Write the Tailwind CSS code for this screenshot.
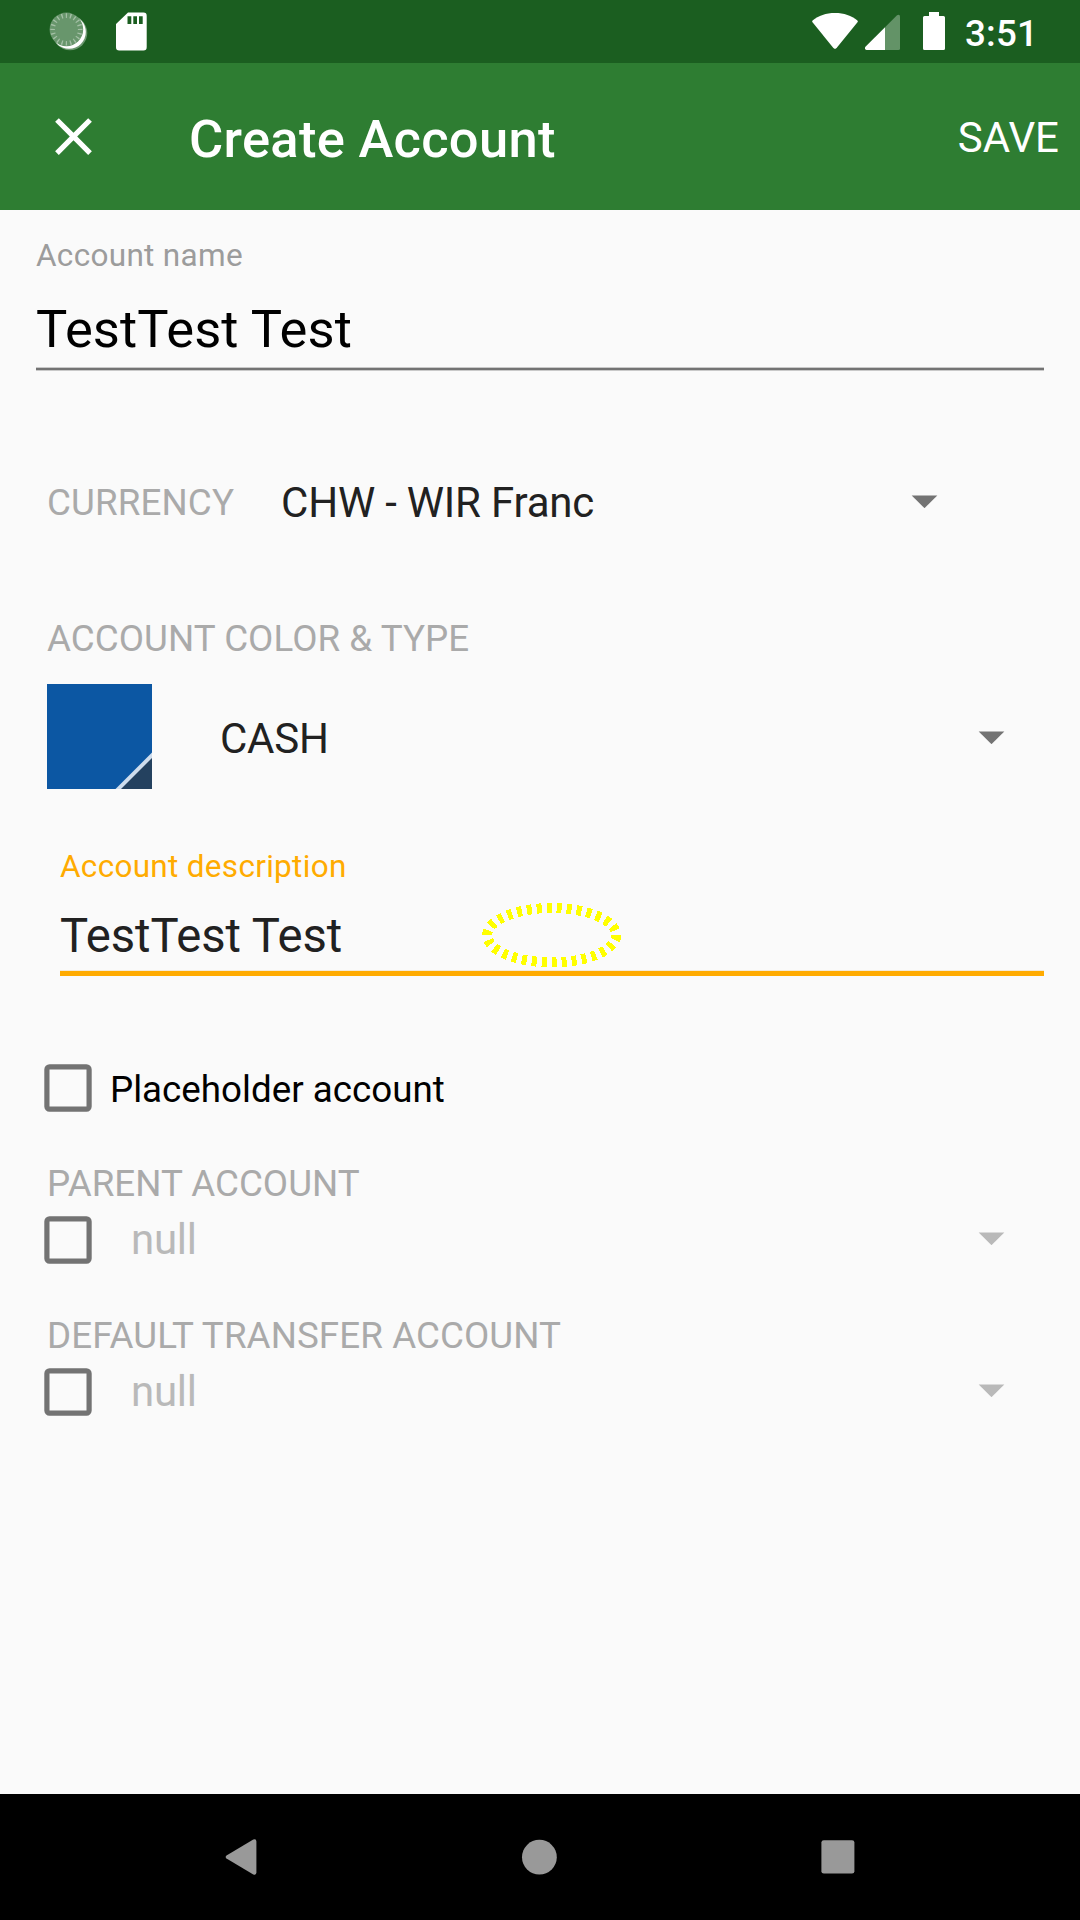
<!DOCTYPE html>
<html lang="en">
<head>
<meta charset="utf-8">
<title>Create Account</title>
<script src="https://cdn.jsdelivr.net/npm/@tailwindcss/browser@4"></script>
</head>
<body class="bg-[#fafafa]">
<div class="relative flex flex-col w-[1080px] h-[1920px] overflow-hidden bg-[#fafafa] font-[Roboto,sans-serif] text-[#212121] whitespace-nowrap">

  <!-- Status bar -->
  <div class="flex items-start h-[63px] bg-[#1b5e20] shrink-0 text-white">
    <svg class="ml-12 mt-[11px] shrink-0" width="40" height="41" viewBox="48 11 40 41">
      <circle cx="70" cy="33" r="17.3" fill="#6c9870"/>
      <circle cx="69" cy="32" r="16.8" fill="#fff"/>
      <circle cx="66.4" cy="29.4" r="16.8" fill="#68966c"/>
      <circle cx="66.4" cy="29.4" r="13.8" fill="none" stroke="#a4c0a6" stroke-width="4.6" pathLength="200" stroke-dasharray="3 7" stroke-dashoffset="1.5"/>
    </svg>
    <svg class="ml-7 mt-3 shrink-0" width="31" height="39" viewBox="0 0 31 39">
      <path fill="#fff" fill-rule="evenodd" d="M12 .5H27.5A3.2 3.2 0 0 1 30.7 3.7V35.2A3.2 3.2 0 0 1 27.500 38.400H3.200A3.200 3.200 0 0 1 0 35.200V12ZM11.500 4.300V12H15.300V4.300ZM17.300 4.300V12H21V4.300ZM23 4.300V12H26.700V4.300Z"/>
    </svg>
    <svg class="ml-auto mt-3 shrink-0" width="46" height="38" viewBox="0 0 46 38">
      <path fill="#fff" d="M.6 8.600C6.500 3.500 14 1 23 1S39.500 3.500 45.400 8.600Q46.200 9.400 45.500 10.300L24.600 36.100Q23 37.700 21.400 36.100L.5 10.300Q-.2 9.400.6 8.600Z"/>
    </svg>
    <svg class="ml-[7px] mt-[14px] shrink-0" width="35" height="37" viewBox="0 0 35 37">
      <path fill="#639367" d="M20 13.200L32 1.200Q35 0 35 2.500V34.500Q35 36 33.500 36H20Z"/>
      <path fill="#fff" d="M20 13.200V36H1.500Q-.5 35.500.2 33Z"/>
    </svg>
    <svg class="ml-[23px] mt-3 shrink-0" width="22" height="38" viewBox="0 0 22 38">
      <path fill="#fff" d="M6 0H16V4H20.500Q22 4 22 5.500V36.500Q22 38 20.500 38H1.500Q0 38 0 36.500V5.500Q0 4 1.500 4H6Z"/>
    </svg>
    <span class="ml-5 w-[71px] mr-[44px] mt-1 leading-[60px] text-[36.75px] tracking-[0.2px] font-medium">3:51</span>
  </div>

  <!-- App bar -->
  <header class="flex items-center h-[147px] bg-[#2e7d32] shrink-0 text-white">
    <svg class="ml-[42px] shrink-0" width="63" height="63" viewBox="0 0 24 24" fill="#fff">
      <path d="M19 6.410L17.590 5 12 10.590 6.410 5 5 6.410 10.590 12 5 17.590 6.410 19 12 13.410 17.590 19 19 17.590 13.410 12z"/>
    </svg>
    <h1 class="ml-[84px] pt-[5px] text-[52.5px] leading-[60px] tracking-[0.28px] font-medium">Create Account</h1>
    <button class="ml-auto mr-[21px] pt-[3px] text-[42px] leading-[60px]">SAVE</button>
  </header>

  <main class="flex flex-col grow">
    <label class="mt-[23px] ml-9 text-[31.5px] leading-[45px] tracking-[0.31px] text-[#9c9c9c]">Account name</label>
    <div class="ml-9 h-[89px] pt-[13px] text-[52.5px] leading-[76px] tracking-[0.1px] text-black">TestTest Test</div>
    <div class="mx-9 h-1 border-y border-[#c9c9c9] bg-[#737373]"></div>

    <div class="flex items-center mt-[99px] h-[65px] pl-[47px]">
      <span class="w-[234px] text-[36.75px] leading-[65px] tracking-[0.12px] text-[#aaaaaa]">CURRENCY</span>
      <span class="text-[42px] leading-[65px] tracking-[-0.2px]">CHW - WIR Franc</span>
      <svg class="ml-auto mr-[142px] mb-[2px]" width="27" height="13" viewBox="0 0 27 13"><path fill="#737373" d="M.7 .4H26.300L13.500 13.200Z"/></svg>
    </div>

    <div class="mt-[81px] ml-[47px] text-[36.75px] leading-[45px] tracking-[0.05px] text-[#aaaaaa]">ACCOUNT COLOR &amp; TYPE</div>
    <div class="flex items-center mt-[23px] h-[105px] pl-[47px]">
      <svg width="105" height="105" viewBox="0 0 105 105">
        <path fill="#0c57a3" d="M0 0H105V105H0Z"/>
        <path fill="#cfdded" d="M105 68.500V105H68.500Z"/>
        <path fill="#24415f" d="M105 74V105H74Z"/>
      </svg>
      <span class="ml-[68px] pt-1 text-[42px] leading-[65px] tracking-[-0.25px]">CASH</span>
      <svg class="ml-auto mr-[75px] mt-[2px]" width="27" height="13" viewBox="0 0 27 13"><path fill="#737373" d="M.7 .4H26.300L13.500 13.200Z"/></svg>
    </div>

    <label class="mt-[55px] ml-[60px] text-[31.5px] leading-[45px] tracking-[0.3px] text-[#ffab00]">Account description</label>
    <div class="ml-[60px] h-[81px] pt-[13px] text-[47.25px] leading-[68px] tracking-[-0.08px]">TestTest Test</div>
    <div class="ml-[60px] mr-9 h-1.5 border-t border-[#f3ead9] bg-[#ffab00]"></div>

    <div class="flex items-center mt-[88px] h-12 pl-11">
      <svg width="48" height="48" viewBox="0 0 48 48"><rect x="2.900" y="2.900" width="42.200" height="42.200" rx="2.600" fill="none" stroke="#737373" stroke-width="5.200"/></svg>
      <span class="ml-[18px] pt-[3px] text-[36.75px] leading-[45px] text-black">Placeholder account</span>
    </div>

    <div class="mt-[49px] ml-[47px] text-[36.75px] leading-[45px] text-[#aaaaaa]">PARENT ACCOUNT</div>
    <div class="flex items-center mt-[10px] h-12 pl-11">
      <svg width="48" height="48" viewBox="0 0 48 48"><rect x="2.900" y="2.900" width="42.200" height="42.200" rx="2.600" fill="none" stroke="#737373" stroke-width="5.200"/></svg>
      <span class="ml-[39px] pb-px text-[42px] leading-[47px] tracking-[-0.25px] text-[#b9b9b9]">null</span>
      <svg class="ml-auto mr-[75px] mb-[3px]" width="27" height="13" viewBox="0 0 27 13"><path fill="#b9b9b9" d="M.7 .4H26.300L13.500 13.200Z"/></svg>
    </div>

    <div class="mt-[49px] ml-[47px] text-[36.75px] leading-[45px] tracking-[0.08px] text-[#aaaaaa]">DEFAULT TRANSFER ACCOUNT</div>
    <div class="flex items-center mt-[10px] h-12 pl-11">
      <svg width="48" height="48" viewBox="0 0 48 48"><rect x="2.900" y="2.900" width="42.200" height="42.200" rx="2.600" fill="none" stroke="#737373" stroke-width="5.200"/></svg>
      <span class="ml-[39px] pb-px text-[42px] leading-[47px] tracking-[-0.25px] text-[#b9b9b9]">null</span>
      <svg class="ml-auto mr-[75px] mb-[3px]" width="27" height="13" viewBox="0 0 27 13"><path fill="#b9b9b9" d="M.7 .4H26.300L13.500 13.200Z"/></svg>
    </div>
  </main>

  <!-- Touch marker over the description field -->
  <svg class="absolute left-[480px] top-[900px]" width="144" height="70" viewBox="480 900 144 70">
    <ellipse cx="551.700" cy="935.200" rx="64.500" ry="27.200" fill="none" stroke="#ffff00" stroke-width="10" pathLength="300" stroke-dasharray="5 5" shape-rendering="crispEdges"/>
  </svg>

  <!-- Navigation bar -->
  <nav class="flex items-center h-[126px] bg-black shrink-0">
    <svg class="ml-[225px]" width="32" height="38" viewBox="0 0 32 38"><path fill="#999" d="M1.500 17.500L28.300 1.600Q31.400.6 31.400 3.500V34.500Q31.400 37.400 28.300 36.400L1.500 20.500Q-.2 19 1.500 17.500Z"/></svg>
    <svg class="ml-[264px]" width="37" height="37" viewBox="0 0 37 37"><circle cx="18.400" cy="18.200" r="17.400" fill="#999"/></svg>
    <svg class="ml-[263px]" width="34" height="34" viewBox="0 0 34 34"><rect x=".4" y=".2" width="33" height="33.400" rx="2.400" fill="#999"/></svg>
  </nav>
</div>
</body>
</html>
